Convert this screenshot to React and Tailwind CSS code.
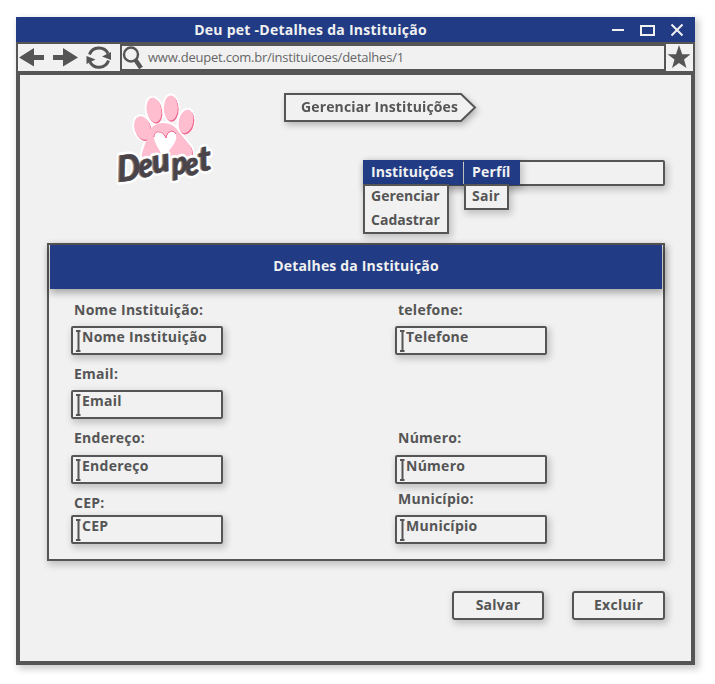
import React from "react";

const CARD_SHADOW = "shadow-[2px_3px_7px_1px_rgba(0,0,0,0.2)]";

function TitleBar() {
  return (
    <div className="flex h-[25px] shrink-0 items-center bg-[#213c85] text-[#f1f1f1]">
      <h1 className="ml-[100px] w-[389px] text-center text-[14px] leading-[25px] font-bold tracking-[0.26px] whitespace-nowrap">
        Deu pet -Detalhes da Instituição
      </h1>
      <svg className="ml-[107px]" width="76" height="25" fill="none" stroke="#f1f1f1" strokeWidth="2">
        <path d="M0 13H12M29 9H42V18H29Z" />
        <path d="M59.500 7.500L70.500 18.500M70.500 7.500L59.500 18.500" />
      </svg>
    </div>
  );
}

function Toolbar() {
  return (
    <div className="flex h-[33px] shrink-0 bg-[#555] pt-[2px] pl-[2px] text-[#555]">
      <div className="h-[27px] w-[102px] bg-[#f1f1f1]">
        <svg width="102" height="27" fill="#555">
          <path d="M1 13.500L16 4V11H26V16H16V22.500ZM60 13.500L45 4V11H35V16H45V22.500Z" />
          <g fill="none" stroke="#555" strokeWidth="3">
            <path d="M71.500 10.500A10 9.500 0 0 1 90 9.500M90.500 16.500A10 9.500 0 0 1 72 18" />
          </g>
          <path d="M93 8V16L84 12.500ZM68.500 12V20L77.500 15.500Z" />
        </svg>
      </div>
      <div className="mt-[2px] ml-[2px] flex h-[23px] w-[542px] items-center bg-[#f1f1f1]">
        <svg width="22" height="23" fill="none" stroke="#555">
          <circle cx="9" cy="8.500" r="7" strokeWidth="2.400" />
          <path d="M13.500 14L19 22" strokeWidth="4.400" />
        </svg>
        <span className="-mt-[2px] ml-[4px] text-[13px] leading-[22px] font-normal tracking-[-0.23px] text-[#666] whitespace-nowrap">
          www.deupet.com.br/instituicoes/detalhes/1
        </span>
      </div>
      <div className="ml-[2px] h-[27px] w-[27px] bg-[#f1f1f1]">
        <svg width="27" height="27" fill="#555">
          <path d="M13 1L16.200 10.200H24.500L18 15.500L20.500 24L13 19L6 24L8.500 15.500L1.500 10.200H10Z" />
        </svg>
      </div>
    </div>
  );
}

function ToePads() {
  return (
    <>
      <ellipse cx="42.500" cy="48" rx="8" ry="12" transform="rotate(-17 42.500 48)" />
      <ellipse cx="54" cy="30" rx="7.300" ry="12.500" transform="rotate(-10 54 30)" />
      <ellipse cx="70.800" cy="28" rx="7" ry="12.500" />
      <ellipse cx="86" cy="41.500" rx="7.200" ry="12" transform="rotate(12 86 41.500)" />
    </>
  );
}

const PALM = "M50 50Q54 43 63 43Q73 43 77 50L91 67Q95 79 87 83L47 83Q39 80 43 70Z";

const LETTERS = [
  { char: "D", place: "translate(18 102) rotate(-7) skewX(-2) scale(0.9 1)", size: 36 },
  { char: "e", place: "translate(39.500 98) rotate(-10) skewX(-2) scale(0.88 1)", size: 34 },
  { char: "u", place: "translate(53 93.500) rotate(-10) skewX(-2)", size: 33 },
  { char: "p", place: "translate(72.500 95) rotate(-8) skewX(-2) scale(0.9 1)", size: 32 },
  { char: "e", place: "translate(86 96) rotate(-10) skewX(-2) scale(0.88 1)", size: 32 },
  { char: "t", place: "translate(99.500 91.500) rotate(-10) skewX(-2)", size: 35 },
];

function Wordmark({ fill, stroke, strokeWidth }) {
  return (
    <g fill={fill} stroke={stroke} strokeWidth={strokeWidth} strokeLinejoin="round" className="font-['Lato',sans-serif] font-black italic">
      {LETTERS.map(({ char, place, size }, i) => (
        <text key={i} transform={place} fontSize={size}>{char}</text>
      ))}
    </g>
  );
}

function Logo() {
  return (
    <svg className="mt-[5px] ml-[80px] shrink-0" width="130" height="120" viewBox="0 0 130 120">
      <g fill="#fff" stroke="#fff" strokeWidth="4">
        <ToePads />
        <path d={PALM} />
      </g>
      <g fill="#ef628b" transform="translate(0.800 1.200)">
        <ToePads />
        <path d={PALM} />
      </g>
      <g fill="#ffbdd0">
        <ToePads />
        <path d={PALM} />
      </g>
      <path d="M64 77C59 70 51 58 55 53C59 49 64 52 66 58C67 51 74 49 76 55C78 62 69 70 64 77Z" fill="#fff" />
      <path d="M54 57C54 50 63 50 66 58C67 51 73 49 76 54" fill="none" stroke="#ef628b" strokeWidth="1" />
      <Wordmark fill="#fff" stroke="#fff" strokeWidth="6" />
      <g transform="translate(-0.700 0.300)">
        <Wordmark fill="#8d878b" stroke="#8d878b" strokeWidth="0.500" />
      </g>
      <g transform="translate(0.400 0)">
        <Wordmark fill="#4a4448" stroke="#4a4448" strokeWidth="0.500" />
      </g>
    </svg>
  );
}

function Field({ label, name, labelClass = "", gapClass }) {
  return (
    <label className="block w-[152px] tracking-[0.26px]">
      <span className={`ml-[3px] block h-[16px] leading-[16px] whitespace-nowrap ${labelClass}`}>{label}</span>
      <span className={`flex h-[29px] rounded-[2px] border-2 border-[#555] pl-[3px] ${gapClass} ${CARD_SHADOW}`}>
        <svg className="mt-[2px] shrink-0" width="5" height="22" stroke="#555" strokeWidth="2">
          <path d="M0 1H4.500M2.500 1V21M0 21H4.500" />
        </svg>
        <span className="ml-[1px] leading-[18px] whitespace-nowrap">{name}</span>
      </span>
    </label>
  );
}

export default function App() {
  return (
    <main className="h-[684px] w-[715px] overflow-hidden bg-white pt-[17px] pl-[16px] font-['Open_Sans','Noto_Sans',sans-serif] text-[14px] font-bold text-[#555]">
      <div className="flex h-[648px] w-[679px] flex-col bg-[#f1f1f1] font-normal shadow-[3px_3px_7px_1px_rgba(0,0,0,0.2)]">
        <TitleBar />
        <Toolbar />
        <div className="h-[590px] border-x-4 border-b-4 border-[#555] font-bold">
          <div className="flex h-[168px]">
            <Logo />
            <div className="ml-[54px]">
              <div className="mt-[18px] h-[30px] w-[194px]">
                <svg className="overflow-visible drop-shadow-[2px_3px_3px_rgba(0,0,0,0.25)]" width="194" height="30">
                  <path d="M1 1H177L191 14.500L177 28H1Z" fill="#f1f1f1" stroke="#555" strokeWidth="2" />
                  <text x="17" y="19" fill="#555" textLength="157">Gerenciar Instituições</text>
                </svg>
              </div>
              <nav className={`mt-[37px] ml-[79px] flex h-[26px] w-[302px] rounded-[2px] border-2 border-[#555] ${CARD_SHADOW}`}>
                <div className="-mt-[2px] -ml-[2px] w-[101px]">
                  <div className={`h-[25px] w-[100px] bg-[#213c85] pl-[8px] leading-[24px] tracking-[0.08px] text-[#f1f1f1] ${CARD_SHADOW}`}>Instituições</div>
                  <div className={`relative -mt-px h-[50px] w-[86px] border-2 border-[#555] bg-[#f1f1f1] pl-[6px] leading-[24px] ${CARD_SHADOW}`}>
                    <div className="-mt-[2px]">Gerenciar</div>
                    <div>Cadastrar</div>
                  </div>
                </div>
                <div className="-mt-[2px]">
                  <div className={`h-[25px] w-[56px] bg-[#213c85] pl-[8px] leading-[24px] tracking-[0.2px] text-[#f1f1f1] ${CARD_SHADOW}`}>Perfíl</div>
                  <div className={`relative -mt-px h-[26px] w-[45px] border-2 border-[#555] bg-[#f1f1f1] pl-[6px] leading-[20px] tracking-[0.25px] ${CARD_SHADOW}`}>Sair</div>
                </div>
              </nav>
            </div>
          </div>
          <section className={`ml-[27px] h-[318px] w-[618px] border-2 border-[#555] ${CARD_SHADOW}`}>
            <h2 className="mx-px h-[44px] bg-[#213c85] text-center leading-[42px] tracking-[0.18px] text-[#f1f1f1] shadow-[1px_3px_7px_1px_rgba(0,0,0,0.3)]">
              Detalhes da Instituição
            </h2>
            <div className="mt-[13px] ml-[22px] flex gap-[172px]">
              <div>
                <Field label="Nome Instituição:" name="Nome Instituição" gapClass="mt-[8px]" />
                <Field label="Email:" name="Email" labelClass="mt-[11px]" gapClass="mt-[8px]" />
                <Field label="Endereço:" name="Endereço" labelClass="mt-[11px]" gapClass="mt-[9px]" />
                <Field label="CEP:" name="CEP" labelClass="mt-[11px]" gapClass="mt-[4px]" />
              </div>
              <div>
                <Field label="telefone:" name="Telefone" gapClass="mt-[8px]" />
                <Field label="Número:" name="Número" labelClass="mt-[75px]" gapClass="mt-[9px]" />
                <Field label="Município:" name="Município" labelClass="mt-[7px]" gapClass="mt-[8px]" />
              </div>
            </div>
          </section>
          <div className="mt-[30px] ml-[432px] flex gap-[28px] tracking-[0.25px]">
            <button className={`h-[29px] w-[92px] rounded-[3px] border-2 border-[#555] pb-[2px] leading-[22px] ${CARD_SHADOW}`}>Salvar</button>
            <button className={`h-[29px] w-[93px] rounded-[3px] border-2 border-[#555] pb-[2px] leading-[22px] ${CARD_SHADOW}`}>Excluir</button>
          </div>
        </div>
      </div>
    </main>
  );
}
